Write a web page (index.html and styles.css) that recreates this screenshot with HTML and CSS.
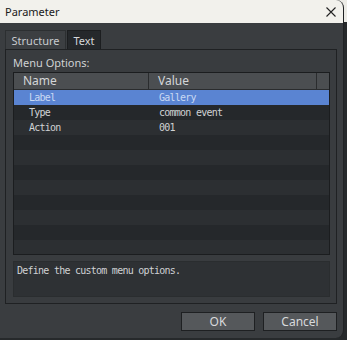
FILE: index.html
```html
<!DOCTYPE html>
<html lang="en">
<head>
  <meta charset="UTF-8">
  <title>Parameter</title>
  <link rel="stylesheet" href="styles.css">
</head>
<body>
  <div class="window">
    <!-- title bar -->
    <div class="titlebar">
      <span class="title">Parameter</span>
      <svg class="close" width="10" height="10" viewBox="0 0 10 10">
        <path d="M0.5 0.5 L9.5 9.5 M9.5 0.5 L0.5 9.5" stroke="#222" stroke-width="1.1" fill="none"/>
      </svg>
    </div>
    <div class="content">
      <div class="tabs">
        <div class="tab active">Structure</div>
        <div class="tab">Text</div>
      </div>
      <div class="panel">
        <div class="caption">Menu Options:</div>
        <div class="list">
          <div class="list-head">
            <div class="col-name">Name</div>
            <div class="col-value">Value</div>
            <div class="col-end"></div>
          </div>
          <div class="row selected"><span class="name">Label</span><span class="value">Gallery</span></div>
          <div class="row"><span class="name">Type</span><span class="value">common event</span></div>
          <div class="row"><span class="name">Action</span><span class="value">001</span></div>
          <div class="row"></div>
          <div class="row"></div>
          <div class="row"></div>
          <div class="row"></div>
          <div class="row"></div>
          <div class="row"></div>
          <div class="row"></div>
          <div class="row"></div>
        </div>
        <div class="help">Define the custom menu options.</div>
      </div>
      <div class="buttons">
        <button class="btn">OK</button>
        <button class="btn">Cancel</button>
      </div>
    </div>
  </div>
</body>
</html>
```

FILE: styles.css
```css
body {
  margin: 0;
  width: 347px;
  height: 340px;
  background: linear-gradient(#ecebe6 0, #ecebe6 22px, #26292b 22px);
  font-family: "Noto Sans", "DejaVu Sans", sans-serif;
  overflow: hidden;
}
.window {
  width: 344px;
  height: 338px;
  background: #3a3d40;
  border-radius: 0 8px 8px 0;
  overflow: hidden;
  box-sizing: border-box;
  border-right: 1px solid #202224;
}
.titlebar {
  height: 23px;
  background: #f2f1ec;
  display: flex;
  align-items: center;
  justify-content: space-between;
  padding: 0 6px 0 5px;
  box-sizing: border-box;
}
.title {
  font-size: 11px;
  color: #1a1a1a;
}
.close {
  margin-right: 1px;
}
.content {
  padding: 7px 6px 0 5px;
}
.tabs {
  display: flex;
  height: 19px;
}
.tab {
  font-size: 11px;
  color: #d6d8da;
  line-height: 19px;
  text-align: center;
  background: #25282b;
  border: 1px solid #1c1e20;
  border-bottom: none;
  box-sizing: border-box;
}
.tab.active {
  background: #3c3f42;
  color: #c8cbce;
  width: 61px;
  margin-right: 1px;
  border-color: #2c2f31;
}
.tab:not(.active) {
  width: 34px;
}
.panel {
  height: 255px;
  border: 1px solid #1f2123;
  box-sizing: border-box;
  padding: 4px 6px 0 7px;
  background: #393c3f;
}
.caption {
  font-size: 11px;
  color: #cfd1d3;
  height: 18px;
  line-height: 18px;
}
.list {
  height: 183px;
  border: 1px solid #1b1d1f;
  box-sizing: border-box;
  background: #25282b;
  overflow: hidden;
}
.list-head {
  display: flex;
  height: 16px;
  background: #4b4e51;
  border-bottom: 1px solid #2a2c2e;
  font-size: 12px;
  color: #d4d6d8;
  line-height: 15px;
}
.col-name {
  width: 135px;
  padding-left: 9px;
  box-sizing: border-box;
  border-right: 1px solid #2a2c2e;
}
.col-value {
  width: 168px;
  padding-left: 9px;
  box-sizing: border-box;
  border-right: 1px solid #2a2c2e;
}
.col-end {
  flex: 1;
}
.row {
  display: flex;
  height: 15px;
  line-height: 15px;
  font-family: "DejaVu Sans Mono", monospace;
  font-size: 10px;
  letter-spacing: -0.75px;
  color: #d0d2d4;
  background: #2c2f32;
}
.row:nth-child(odd) {
  background: #25282b;
}
.row.selected {
  background: #5a84d2;
  color: #c9d9f2;
}
.name {
  width: 136px;
  padding-left: 15px;
  box-sizing: border-box;
}
.value {
  padding-left: 9px;
}
.help {
  margin-top: 6px;
  height: 36px;
  border: 1px solid #2a2d2f;
  background: #2e3134;
  box-sizing: border-box;
  font-family: "DejaVu Sans Mono", monospace;
  font-size: 10px;
  letter-spacing: -0.75px;
  color: #d0d2d4;
  padding: 3px 0 0 3px;
}
.buttons {
  display: flex;
  justify-content: flex-end;
  gap: 8px;
  margin-top: 8px;
}
.btn {
  width: 74px;
  height: 19px;
  background: #55585b;
  border: 1px solid #1e2022;
  color: #d8dadc;
  font-family: "Noto Sans", sans-serif;
  font-size: 12px;
  padding: 0;
  line-height: 16px;
}
```
